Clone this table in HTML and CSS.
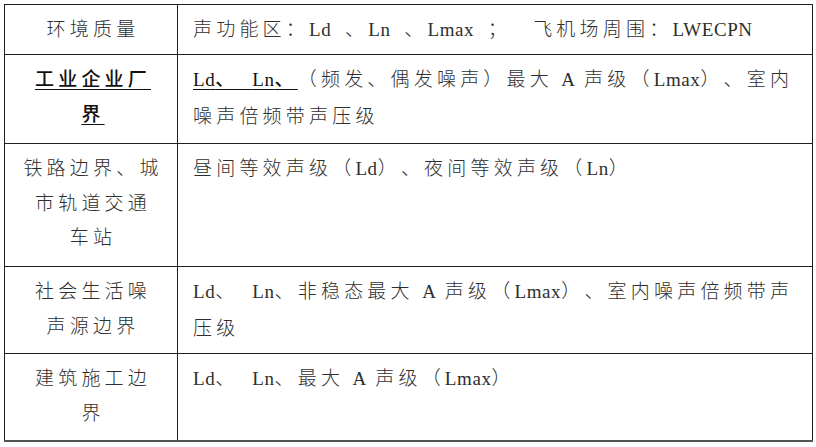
FILE: index.html
```html
<!DOCTYPE html>
<html lang="zh-CN">
<head>
<meta charset="utf-8">
<title>噪声监测指标</title>
<link rel="stylesheet" href="styles.css">
</head>
<body>
<table class="grid">
  <colgroup><col class="c-left"><col class="c-right"></colgroup>
  <tr class="r1">
    <td class="lab">环境质量</td>
    <td class="val">声功能区：<span class="lat">Ld</span>&ensp;、<span class="lat">Ln</span>&ensp;、<span class="lat">Lmax</span>&ensp;；&ensp;&nbsp;飞机场周围：<span class="lat">LWECPN</span></td>
  </tr>
  <tr class="r2">
    <td class="lab"><span class="ul strong">工业企业厂</span><br><span class="ul strong">界</span></td>
    <td class="val"><span class="ul strong"><span class="lat">Ld</span>、&ensp;<span class="lat">Ln</span>、</span>（频发、偶发噪声）最大 <span class="lat">A</span> 声级（<span class="lat">Lmax</span>）、室内<br>噪声倍频带声压级</td>
  </tr>
  <tr class="r3">
    <td class="lab">铁路边界、城<br>市轨道交通<br>车站</td>
    <td class="val">昼间等效声级（<span class="lat">Ld</span>）、夜间等效声级（<span class="lat">Ln</span>）</td>
  </tr>
  <tr class="r4">
    <td class="lab">社会生活噪<br>声源边界</td>
    <td class="val"><span class="lat">Ld</span>、&ensp;<span class="lat">Ln</span>、非稳态最大 <span class="lat">A</span> 声级（<span class="lat">Lmax</span>）、室内噪声倍频带声<br>压级</td>
  </tr>
  <tr class="r5">
    <td class="lab">建筑施工边<br>界</td>
    <td class="val"><span class="lat">Ld</span>、&ensp;<span class="lat">Ln</span>、最大 <span class="lat">A</span> 声级（<span class="lat">Lmax</span>）</td>
  </tr>
</table>
</body>
</html>
```

FILE: styles.css
```css
html, body {
  margin: 0;
  padding: 0;
  background: #ffffff;
}

body {
  padding: 4px 0 0 4px;
  font-family: "Noto Sans CJK SC", "Noto Sans", sans-serif;
  font-size: 19px;
  color: #2e2e2e;
}

.grid {
  border-collapse: collapse;
  width: 808px;
  table-layout: fixed;
  border-bottom: 2px solid #555;
}

.c-left { width: 173px; }
.c-right { width: 635px; }

.grid td {
  border: 1px solid #1e1e1e;
  vertical-align: top;
  padding: 6px 0 0 0;
  line-height: 34.5px;
  letter-spacing: 4.2px;
  white-space: nowrap;
  font-weight: 300;
  text-spacing-trim: space-all;
  font-feature-settings: "halt" 0, "chws" 0;
}

.grid td.lab {
  text-align: center;
  padding-left: 4px;
}

.grid td.val {
  text-align: left;
  padding-left: 15px;
}

.grid tr.r1 { height: 50px; }
.grid tr.r2 { height: 89px; }
.grid tr.r3 { height: 123px; }
.grid tr.r4 { height: 87px; }
.grid tr.r5 { height: 87px; }

.lat {
  font-family: "Liberation Serif", serif;
  letter-spacing: 0.6px;
  font-size: 19px;
}

.ul {
  text-decoration: underline;
  text-underline-offset: 3px;
  text-decoration-thickness: 1px;
}

.strong {
  font-weight: 500;
  color: #111;
}
```
